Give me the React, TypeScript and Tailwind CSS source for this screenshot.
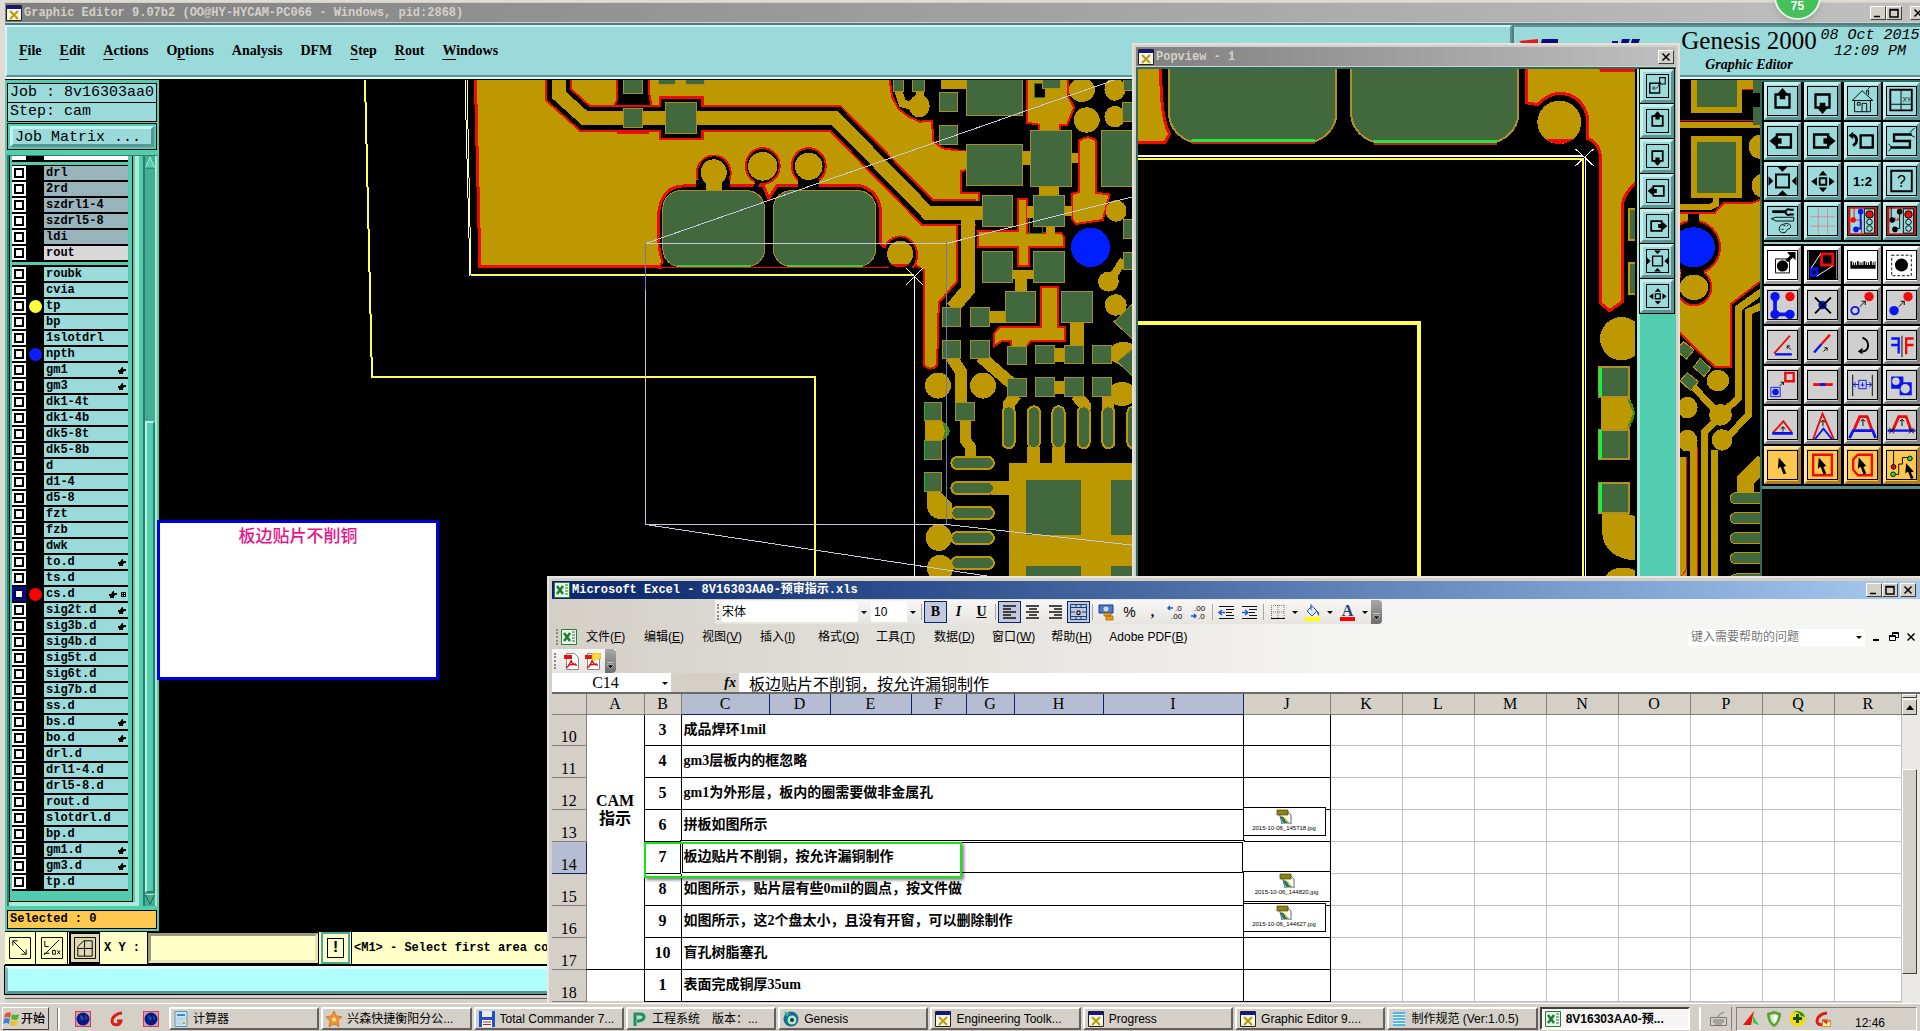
import type { ReactNode } from "react";

const MONO = "font-['Liberation_Mono','Noto_Sans_CJK_SC',monospace]";
const SERIF = "font-['Liberation_Serif','Noto_Sans_CJK_SC',serif]";
const SANS = "font-['Liberation_Sans','Noto_Sans_CJK_SC',sans-serif]";

const TEAL_BEVEL =
  "border-3 border-t-[#c6f0ef] border-l-[#c6f0ef] border-r-[#5c9496] border-b-[#5c9496] bg-[#9adadb]";
const GREY_BEVEL =
  "border-3 border-t-[#f0f0f0] border-l-[#f0f0f0] border-r-[#808080] border-b-[#808080] bg-[#cfcfcf]";
const WHITE_BEVEL =
  "border-3 border-t-[#ffffff] border-l-[#ffffff] border-r-[#a0a0a0] border-b-[#a0a0a0] bg-white";
const GOLD_BEVEL =
  "border-3 border-t-[#ffe3a0] border-l-[#ffe3a0] border-r-[#a97c28] border-b-[#a97c28] bg-[#fdc850]";
const WIN_BEVEL =
  "border border-t-white border-l-white border-r-[#404040] border-b-[#404040] bg-[#d4d0c8]";

const GOLD = "#be9800";
const PAD = "#42693e";
const RED = "#f00a00";
const YELLOW = "#ffff50";

/* ---------- layer list ---------- */

type Layer = { name: string; dot?: string; hand?: boolean; active?: boolean; tone?: string };

const drillLayers: Layer[] = [
  { name: "drl", tone: "bg-[#9ab4be]" },
  { name: "2rd", tone: "bg-[#9ab4be]" },
  { name: "szdrl1-4", tone: "bg-[#9ab4be]" },
  { name: "szdrl5-8", tone: "bg-[#9ab4be]" },
  { name: "ldi", tone: "bg-[#9ab4be]" },
  { name: "rout", tone: "bg-[#d8d8d8]" },
];

const layers: Layer[] = [
  { name: "roubk" },
  { name: "cvia" },
  { name: "tp", dot: "bg-[#ffff3c]" },
  { name: "bp" },
  { name: "1slotdrl" },
  { name: "npth", dot: "bg-[#0a1eff]" },
  { name: "gm1", hand: true },
  { name: "gm3", hand: true },
  { name: "dk1-4t" },
  { name: "dk1-4b" },
  { name: "dk5-8t" },
  { name: "dk5-8b" },
  { name: "d" },
  { name: "d1-4" },
  { name: "d5-8" },
  { name: "fzt" },
  { name: "fzb" },
  { name: "dwk" },
  { name: "to.d", hand: true },
  { name: "ts.d" },
  { name: "cs.d", dot: "bg-[#ff0000]", hand: true, active: true },
  { name: "sig2t.d", hand: true },
  { name: "sig3b.d", hand: true },
  { name: "sig4b.d" },
  { name: "sig5t.d" },
  { name: "sig6t.d" },
  { name: "sig7b.d" },
  { name: "ss.d" },
  { name: "bs.d", hand: true },
  { name: "bo.d", hand: true },
  { name: "drl.d" },
  { name: "drl1-4.d" },
  { name: "drl5-8.d" },
  { name: "rout.d" },
  { name: "slotdrl.d" },
  { name: "bp.d" },
  { name: "gm1.d", hand: true },
  { name: "gm3.d", hand: true },
  { name: "tp.d" },
];

function LayerRow({ layer }: { layer: Layer }) {
  return (
    <label className="flex h-4 items-start bg-black">
      <span
        className={`flex h-[14px] w-[14px] shrink-0 items-center justify-center ${layer.active ? "bg-[#0a0a96]" : "bg-white"}`}
      >
        <input
          type="checkbox"
          defaultChecked={layer.active}
          className="size-[10px] appearance-none border-2 border-black bg-white checked:border-[#000050]"
        />
      </span>
      <span className="flex h-[14px] w-[18px] shrink-0 items-center justify-center">
        {layer.dot && <span className={`size-[13px] rounded-full ${layer.dot}`} />}
      </span>
      <span
        className={`flex h-[14px] flex-1 items-center gap-1 pr-[2px] pl-[2px] text-xs leading-[14px] font-bold ${layer.tone ?? "bg-[#9adadb]"}`}
      >
        <span className="flex-1">{layer.name}</span>
        {layer.hand && (
          <svg width="8" height="8" viewBox="0 0 8 8">
            <path d="M0 4h2l2-3h1v2h3v2H6v1H5v2H1V6H0z" />
          </svg>
        )}
        {layer.active && (
          <svg width="5" height="5" viewBox="0 0 5 5" fill="none" stroke="#000">
            <path d="M.5.5h4v4h-4zM2.500 0v5M0 2.500h5" />
          </svg>
        )}
      </span>
    </label>
  );
}

function Sidebar() {
  return (
    <aside className={`flex w-[154px] shrink-0 flex-col bg-[#52ccae] px-[2px] pt-[3px] ${MONO}`}>
      <div className="h-[20px] border border-black bg-[#9adadb] pl-[2px] text-[15px] leading-[18px] whitespace-nowrap">
        Job : 8v16303aa0
      </div>
      <div className="h-[19px] border border-t-0 border-black bg-[#9adadb] pl-[2px] text-[15px] leading-[17px]">
        Step: cam
      </div>
      <div className="mt-px h-[27px] border border-black p-[2px]">
        <button className={`block h-full w-full border-2 pl-[2px] text-left text-[15px] leading-[17px] ${TEAL_BEVEL}`}>
          Job Matrix ...
        </button>
      </div>
      <div className="mt-[5px] flex min-h-0 flex-1 border-t border-l-2 border-[#357e6b]">
        <div className="flex flex-1 flex-col border-r-4 border-b-4 border-[#a8ecd8]">
          <div className="mr-[2px] flex min-h-0 flex-1 flex-col gap-[3px] border-x border-b border-black pr-1 pl-[2px]">
            <div className="flex h-[6px] bg-black pb-[2px]">
              <span className="w-[14px] bg-white" />
              <span className="ml-[18px] flex-1 bg-white" />
            </div>
            <div className="border-t border-black">
              {drillLayers.map((l) => (
                <LayerRow key={l.name} layer={l} />
              ))}
            </div>
            <div className="border-t-2 border-black">
              {layers.map((l) => (
                <LayerRow key={l.name} layer={l} />
              ))}
            </div>
          </div>
        </div>
        <div className="ml-1 flex w-[14px] flex-col border-x-2 border-l-[#2f7a68] border-r-[#a8ecd8] bg-[#44ad94]">
          <svg width="10" height="13" viewBox="0 0 10 13">
            <path d="M5 1 9.500 11.500H.5z" fill="#52ccae" stroke="#a8ecd8" />
            <path d="M.5 12h9" stroke="#1d6351" />
          </svg>
          <div className="h-[252px]" />
          <div className="flex-1 border-2 border-t-[#b9f2e2] border-r-[#2f7a68] border-b-[#2f7a68] border-l-[#b9f2e2] bg-[#52ccae]" />
          <svg width="10" height="13" viewBox="0 0 10 13">
            <path d="M5 11.500 9.500 1.500H.5z" fill="#44ad94" stroke="#1d6351" />
            <path d="M.5 1.500h9" stroke="#a8ecd8" />
          </svg>
        </div>
      </div>
      <div className="mt-1 mb-[2px] h-[19px] border border-black bg-[#ffc850] pl-[2px] text-xs leading-[17px] font-bold">
        Selected : 0
      </div>
    </aside>
  );
}

/* ---------- board artwork ---------- */

type Box = [number, number, number, number];

const pads: Box[] = [
  [377, 10, 43, 62], [377, 115, 43, 58], [473, 97, 72, 93], [1106, 68, 40, 56], [1106, 168, 40, 55],
  [1168, 10, 129, 126], [1168, 223, 129, 123], [1316, 181, 95, 170], [1342, 10, 43, 47], [1478, 181, 90, 170],
  [1530, 20, 40, 42], [1527, 99, 40, 56], [1205, 378, 70, 93], [1323, 378, 70, 93], [1205, 545, 70, 92],
  [1323, 545, 70, 92], [1531, 450, 40, 56], [1531, 548, 40, 52], [1258, 664, 70, 93], [1387, 664, 72, 93],
  [1112, 712, 42, 58], [1177, 712, 44, 58], [1112, 811, 42, 54], [1177, 811, 44, 54], [1262, 829, 44, 55],
  [1327, 826, 43, 54], [1394, 826, 44, 54], [1458, 826, 44, 54], [1262, 925, 44, 55], [1327, 923, 43, 56],
  [1394, 923, 44, 56], [1458, 923, 44, 56], [1070, 997, 40, 56], [1142, 997, 45, 56], [1070, 1112, 40, 56],
  [1070, 1209, 40, 56],
];

const goldDots: Box[] = [
  [585, 308, 30, 40], [698, 289, 34, 43], [804, 289, 32, 41], [1015, 552, 30, 40], [1102, 947, 30, 39],
  [1206, 947, 30, 39], [1104, 1403, 30, 40], [1107, 1495, 30, 40], [1059, 108, 24, 34], [1434, 60, 30, 36],
  [1445, 150, 30, 38], [1510, 58, 24, 34], [1510, 140, 24, 32], [1513, 423, 24, 32], [1495, 635, 24, 30],
  [1512, 705, 25, 32], [1530, 850, 34, 34], [1526, 972, 34, 36],
];

const goldLinks: Box[] = [
  [1297, 243, 20, 43], [1334, 350, 48, 28], [1410, 250, 16, 30], [1280, 600, 27, 64], [1221, 724, 38, 34],
  [1407, 757, 32, 70], [1370, 835, 25, 40], [1370, 933, 25, 40], [1307, 1130, 31, 52], [1365, 1130, 31, 52],
  [1225, 1234, 42, 40], [1275, 600, 48, 28], [1351, 471, 21, 20], [1110, 28, 56, 30], [1140, 243, 30, 40],
  [1307, 408, 16, 36], [1392, 408, 20, 30], [1350, 55, 20, 30],
];

function MainBoard() {
  return (
    <svg
      className="absolute inset-0 h-full w-full"
      shapeRendering="crispEdges"
      role="img"
      aria-label="Board artwork"
    >
      <g transform="translate(301 -10) scale(.4337 .3333)">
        {/* copper pour */}
        <path
          d="M34 0 46 590H466L970 600 985 590 1050 585 1071 602V886Q1085 906 1100 886L1104 698 1145 636V460H1196V368H1155V304L1168 300V245L1112 235 1092 215 1088 152 1060 155 1035 140 1012 118 996 80 988 0Z"
          fill={GOLD}
          stroke={RED}
          strokeWidth="2"
          vectorEffect="non-scaling-stroke"
        />
        <path d="M35 0 46 590H466" fill="none" stroke={RED} strokeWidth="3" vectorEffect="non-scaling-stroke" />
        {/* clearance around the two big pads and their vias */}
        <g fill="#000" stroke={RED} strokeWidth="3">
          <path d="M462 592 468 575Q458 540 458 500V430Q465 350 515 348H700L712 386 730 348H925Q968 365 970 430V520L985 540V592Z" vectorEffect="non-scaling-stroke" />
          <ellipse cx="585" cy="310" rx="38" ry="52" vectorEffect="non-scaling-stroke" />
          <ellipse cx="698" cy="288" rx="38" ry="52" vectorEffect="non-scaling-stroke" />
          <ellipse cx="804" cy="288" rx="38" ry="52" vectorEffect="non-scaling-stroke" />
          <ellipse cx="1015" cy="555" rx="38" ry="54" vectorEffect="non-scaling-stroke" />
        </g>
        <path d="M462 592 470 575Q460 540 461 500V430Q468 354 515 352H545V330H622V352H676L682 330 692 338 686 356 712 392 735 352H780V325H827V352H925Q965 369 967 430V525L985 540V592Z" />
        <ellipse cx="585" cy="310" rx="37" ry="51" />
        <ellipse cx="698" cy="288" rx="37" ry="51" />
        <ellipse cx="804" cy="288" rx="37" ry="51" />
        <ellipse cx="1015" cy="555" rx="37" ry="53" />
        <path d="M466 594H1066V640H466Z" />
        <path d="M567 335h37v28h-37z" fill={GOLD} />
        {/* clearance for the trace */}
        <path d="M362 20H435V63L442 110H355L362 90Z" stroke={RED} strokeWidth="2" vectorEffect="non-scaling-stroke" />
        <path d="M462 84h96v122h-96zM365 110h68v77h-68z" stroke={RED} strokeWidth="3" vectorEffect="non-scaling-stroke" />
        <g fill="none">
          <path d="M228 0V75L288 145H865L1078 428H1190" stroke={RED} strokeWidth="27" vectorEffect="non-scaling-stroke" />
          <path d="M464 86h92v118h-92zM367 112h64v63h-64z" fill="#000" />
          <path d="M228 0V75L288 145H865L1078 428H1200" stroke="#000" strokeWidth="23" vectorEffect="non-scaling-stroke" />
          <path d="M228 0V75L288 145H865L1078 428H1205" stroke={GOLD} strokeWidth="14" vectorEffect="non-scaling-stroke" />
          <path d="M1172 440V658L1135 715" stroke={GOLD} strokeWidth="14" vectorEffect="non-scaling-stroke" />
        </g>
        <path d="M1148 466h8v175h-8z" />
        {/* top right copper */}
        <g fill={GOLD} stroke={RED} strokeWidth="2">
          <path d="M1308 0H1400L1402 80 1416 112 1400 164H1383V190H1334V164L1308 158Z" vectorEffect="non-scaling-stroke" />
          <path d="M1428 212Q1448 192 1467 212V368L1498 374 1482 450 1420 462 1410 445V372L1428 366Z" vectorEffect="non-scaling-stroke" />
          <path d="M1195 484H1287V386H1308V490H1386L1392 500V530H1312V588H1286V530H1195Z" vectorEffect="non-scaling-stroke" />
          <path d="M1340 650H1378V770H1395V812H1318L1305 830H1270V812H1250L1232 828V790L1245 770H1340Z" vectorEffect="non-scaling-stroke" />
        </g>
        <path d="M1312 436h30v56h-30z" stroke="#2f7a1c" strokeWidth="1" vectorEffect="non-scaling-stroke" />
        <path d="M1325 42h24v40h-24z" stroke="#2f7a1c" strokeWidth="1" vectorEffect="non-scaling-stroke" />
        {goldLinks.map(([x, y, w, h]) => (
          <rect key={`${x}-${y}`} x={x} y={y} width={w} height={h} fill={GOLD} />
        ))}
        {goldDots.map(([x, y, rx, ry]) => (
          <ellipse key={`${x}-${y}`} cx={x} cy={y} rx={rx} ry={ry} fill={GOLD} />
        ))}
        <path d="M993 583h44q-22 18-44 0z" fill={RED} />
        <g fill="none" stroke={GOLD}>
          <path d="M1200 860 1280 950" strokeWidth="12" vectorEffect="non-scaling-stroke" />
          <path d="M1132 860 1155 905V1000" strokeWidth="12" vectorEffect="non-scaling-stroke" />
          <path d="M1165 1050V1110L1176 1130V1162" strokeWidth="11" vectorEffect="non-scaling-stroke" />
          <path d="M1282 975 1267 1000V1020M1420 975 1440 1005V1020M1495 975V1020" strokeWidth="12" vectorEffect="non-scaling-stroke" />
          <path d="M1530 570 1495 640M1010 60 1020 100 1060 115M1060 60V90" strokeWidth="8" vectorEffect="non-scaling-stroke" />
        </g>
        <path d="M1073 1053H1110Q1146 1083 1110 1112H1073Z" fill={GOLD} />
        <path d="M1112 1053Q1146 1083 1112 1112L1118 1083Z" fill="#3f8a0c" />
        <path d="M1076 1265H1108L1134 1300V1348H1105Q1076 1340 1076 1300Z" fill={GOLD} />
        {/* pads */}
        <g fill={PAD} stroke="#a8901e">
          {pads.map(([x, y, w, h]) => (
            <rect key={`${x}-${y}`} x={x} y={y} width={w} height={h} vectorEffect="non-scaling-stroke" />
          ))}
          <rect x="468" y="362" width="234" height="228" rx="42" ry="50" vectorEffect="non-scaling-stroke" />
          <rect x="723" y="362" width="235" height="228" rx="42" ry="50" vectorEffect="non-scaling-stroke" />
          <path d="M1508 755 1560 690V820ZM1515 875 1560 825V930Z" vectorEffect="non-scaling-stroke" />
          <path d="M1000 20h23v46h-23zM1043 20h27v46h-27zM458 20h40v25h-40zM520 20h44v25h-44z" vectorEffect="non-scaling-stroke" />
        </g>
        <path d="M500 588H672M755 588H930" stroke="#22d84a" strokeWidth="2" vectorEffect="non-scaling-stroke" />
        <path d="M1071 999v52M1071 1114v52M1071 1211v52" stroke="#00c83c" strokeWidth="1" vectorEffect="non-scaling-stroke" />
        <g fill={PAD} stroke={GOLD} strokeWidth="2">
          {[1265, 1323, 1380, 1438, 1495, 1553].map((x) => (
            <rect key={x} x={x - 14} y="1009" width="28" height="126" rx="14" ry="18" vectorEffect="non-scaling-stroke" />
          ))}
          {[1160, 1235, 1310, 1385, 1460].map((y) => (
            <rect key={y} x="1133" y={y} width="98" height="38" rx="16" ry="19" vectorEffect="non-scaling-stroke" />
          ))}
        </g>
        <path d="M1265 1180H1570V1540H1265Z" fill={GOLD} />
        <path d="M1305 1230h127v165h-127zM1500 1230h70v165h-70zM1305 1488h127v50h-127zM1500 1488h70v50h-70z" fill={PAD} />
        <ellipse cx="1454" cy="532" rx="45" ry="59" fill="#001eff" />
      </g>

      {/* board seen to the right of the popview */}
      <g transform="translate(961 -80) scale(.5102 .3333)">
        <g fill={GOLD}>
          <path d="M1119 200h101v138h-101zM1119 408h101v186h-101zM1220 200h20v68h-20zM1090 365h164v20h-164z" />
          <ellipse cx="1254" cy="440" rx="22" ry="36" />
          <ellipse cx="1260" cy="557" rx="22" ry="36" />
        </g>
        <path d="M1090 362H1240M1220 268h20" stroke={RED} strokeWidth="1" vectorEffect="non-scaling-stroke" />
        <path d="M1131 200h79v121h-79zM1131 427h77v151h-77zM1240 200h20v80h-20zM1240 320h20v55h-20z" fill={PAD} />
        <path d="M1168 590V612L1155 622H1090" fill="none" stroke={GOLD} strokeWidth="6" vectorEffect="non-scaling-stroke" />
        <path
          d="M1080 640H1165L1184 608H1240L1262 596V836L1198 912V1100H1165L1098 1000H1080Z"
          fill={GOLD}
          stroke={RED}
          strokeWidth="2"
          vectorEffect="non-scaling-stroke"
        />
        <g stroke={RED} strokeWidth="2">
          <ellipse cx="1124" cy="742" rx="52" ry="80" vectorEffect="non-scaling-stroke" />
          <ellipse cx="1125" cy="862" rx="34" ry="54" vectorEffect="non-scaling-stroke" />
        </g>
        <path d="M1113 642h22v40h-22zM1100 800h45v30h-45z" />
        <ellipse cx="1124" cy="742" rx="42" ry="60" fill="#001eff" />
        <ellipse cx="1125" cy="862" rx="28" ry="38" fill={GOLD} />
        <g fill="none" stroke={GOLD} strokeWidth="7">
          <path d="M1262 870 1212 925V1195L1180 1240" vectorEffect="non-scaling-stroke" />
          <path d="M1262 915 1232 935V1245L1185 1320" vectorEffect="non-scaling-stroke" />
          <path d="M1175 1250 1146 1295V1740M1165 1350V1740M1125 1330V1740M1104 1370V1740M1120 1155 1170 1235" vectorEffect="non-scaling-stroke" />
          <path d="M1262 1385 1226 1440V1480" strokeWidth="17" vectorEffect="non-scaling-stroke" />
        </g>
        <path d="M1110 1370V1710L1100 1728M1132 1340V1740" fill="none" stroke={RED} strokeWidth="1" vectorEffect="non-scaling-stroke" />
        <g fill={GOLD}>
          <ellipse cx="1172" cy="1142" rx="22" ry="32" />
          <ellipse cx="1177" cy="1245" rx="22" ry="32" />
          <ellipse cx="1180" cy="1320" rx="20" ry="32" />
          <ellipse cx="1112" cy="1223" rx="20" ry="32" />
          <ellipse cx="1112" cy="1322" rx="20" ry="32" />
        </g>
        <g fill={PAD} stroke={GOLD}>
          <path d="M1105 1025 1125 1050 1110 1078 1090 1050ZM1137 1075 1158 1105 1145 1130 1124 1102ZM1112 1118 1134 1145 1118 1172 1098 1142Z" vectorEffect="non-scaling-stroke" />
          {[1478, 1538, 1598, 1658, 1722].map((y) => (
            <rect key={y} x="1196" y={y} width="80" height="34" rx="12" ry="16" vectorEffect="non-scaling-stroke" />
          ))}
        </g>
      </g>

      {/* profile outlines */}
      <g transform="translate(-159 -80)" fill="none">
        <path d="M365 80 372 377H815V700" stroke={YELLOW} strokeWidth="2" />
        <path d="M465 80 470 276" stroke="#fff" />
        <path d="M467 80 471 275" stroke={YELLOW} />
        <path d="M471 275H914" stroke={YELLOW} strokeWidth="2" />
        <path d="M471 277H914" stroke="#000078" />
        <path d="M914.500 276V600" stroke="#fff" />
        <path d="M906 268 923 285M923 268 906 285" stroke="#fff" />
        <path d="M645.500 524V243.500H946.500V524.500H645.500L1000 578M645.500 243.500 1140 71M946.500 243.500 1140 195M946.500 524.500 1140 546" stroke="#c8c8dc" />
        <path d="M946.500 243V524M645.500 243V290" stroke="#6e78b4" />
      </g>
    </svg>
  );
}

function PopviewBoard() {
  return (
    <svg className="h-full w-full" shapeRendering="crispEdges" role="img" aria-label="Popview artwork">
      <g transform="translate(-18 -69) scale(.5102 .3333)">
        <path d="M10 180H80Q78 350 97 402L88 428H10Z" fill={GOLD} stroke={RED} strokeWidth="3" vectorEffect="non-scaling-stroke" />
        <g fill={PAD} stroke="#b09020" strokeWidth="2">
          <rect x="96" y="100" width="328" height="328" rx="60" ry="90" vectorEffect="non-scaling-stroke" />
          <rect x="453" y="100" width="328" height="328" rx="60" ry="90" vectorEffect="non-scaling-stroke" />
        </g>
        <path d="M142 430H382M497 432H738" stroke="#c81e1e" strokeWidth="2" vectorEffect="non-scaling-stroke" />
        <path d="M142 423H382M497 424H738" stroke="#22e645" strokeWidth="3" vectorEffect="non-scaling-stroke" />
        <path
          d="M796 180V308L818 314Q838 282 861 280 905 282 916 350V415Q942 430 942 480V910L960 932 985 905V610Q990 570 1020 540V180Z"
          fill={GOLD}
          stroke={RED}
          strokeWidth="3"
          vectorEffect="non-scaling-stroke"
        />
        <path d="M935 200H1010V216H942Z" fill={RED} />
        <ellipse cx="861" cy="367" rx="43" ry="65" fill={GOLD} />
        <path d="M834 418H888Q861 446 834 418Z" fill={RED} />
        <path d="M990 620Q992 585 1012 560V935H990Z" fill="#000" />
        <path d="M998 628h20v92h-20zM998 790h20v92h-20z" fill={PAD} stroke={GOLD} strokeWidth="2" vectorEffect="non-scaling-stroke" />
        <ellipse cx="983" cy="1016" rx="42" ry="65" fill={GOLD} />
        <path d="M943 1190H997Q1015 1240 997 1290H943Z" fill={GOLD} />
        <path d="M992 1188Q1026 1240 992 1290L1006 1240Z" fill="#3f8a0c" />
        <path d="M945 1538H985L1012 1550V1682Q950 1675 945 1600Z" fill={GOLD} />
        <ellipse cx="986" cy="1735" rx="34" ry="32" fill={GOLD} />
        <g fill={PAD} stroke="#b09020" strokeWidth="2">
          <rect x="938" y="1101" width="59" height="90" vectorEffect="non-scaling-stroke" />
          <rect x="938" y="1289" width="59" height="89" vectorEffect="non-scaling-stroke" />
          <rect x="938" y="1448" width="59" height="90" vectorEffect="non-scaling-stroke" />
        </g>
        <path d="M941 1103v86M941 1291v86M941 1450v86" stroke="#00ff3c" strokeWidth="3" vectorEffect="non-scaling-stroke" />
        <path d="M30 467H908" stroke="#fffab4" strokeWidth="2" vectorEffect="non-scaling-stroke" />
        <path d="M30 477H908V1800" fill="none" stroke={YELLOW} strokeWidth="2" vectorEffect="non-scaling-stroke" />
        <path d="M913 470V1800" stroke="#fff" strokeWidth="1" vectorEffect="non-scaling-stroke" />
        <path d="M893 447 928 497M928 447 893 497" stroke="#fff" strokeWidth="1" vectorEffect="non-scaling-stroke" />
        <path d="M30 969H586V1800" fill="none" stroke={YELLOW} strokeWidth="4" vectorEffect="non-scaling-stroke" />
      </g>
    </svg>
  );
}

/* ---------- tool icons, drawn on a 30x30 board ---------- */

const UP = "M15 1 21 8H18V13H12V8H9Z";
const LEFT = "M1 15 8 9V12H14V18H8V21Z";
const k = "#000";
const r = "#f00a0a";
const b = "#0a14f0";

const glyphs: Record<string, ReactNode> = {
  "Pan up": <><path d="M7.500 8h15v14h-15z" fill="none" stroke={k} strokeWidth="2.500" /><path d={UP} /></>,
  "Pan down": <g transform="matrix(1 0 0 -1 0 30)"><path d="M7.500 8h15v14h-15z" fill="none" stroke={k} strokeWidth="2.500" /><path d={UP} /></g>,
  Home: (
    <g fill="none" stroke={k}>
      <path d="M6.500 14.500v12h17v-12M4 14.500 14.500 4 26 14.500ZM19.500 7V3.500h2V9M14.500 26.500v-9h5v9M9.500 16.500h3v3h-3zM21 2l2-2" />
    </g>
  ),
  "XY view": (
    <>
      <path d="M3 3h23v22H3z" fill="none" stroke={k} strokeWidth="2" />
      <path d="M14.500 3v22M3 18.500h23" fill="none" stroke={k} />
      <text x="16" y="16" fontSize="7" fontFamily="Liberation Sans">XY</text>
    </>
  ),
  "Pan left": <><path d="M9 8h15v14H9z" fill="none" stroke={k} strokeWidth="2.500" /><path d={LEFT} /></>,
  "Pan right": <g transform="matrix(-1 0 0 1 30 0)"><path d="M9 8h15v14H9z" fill="none" stroke={k} strokeWidth="2.500" /><path d={LEFT} /></g>,
  "Previous view": <><path d="M13 9h13v13H13z" fill="none" stroke={k} strokeWidth="2.500" /><path d="M3 9h3q4 3 2 8l-3 3" fill="none" stroke={k} strokeWidth="3" /><path d="M0 9 5 5v8z" /></>,
  Snake: <><path d="M26 8H7v7h17v7H3" fill="none" stroke={k} strokeWidth="2.500" /><path d="M24 6 29 1M24 8l5 3M5 22l-4-4M5 22l-4 4" stroke={k} /></>,
  "Zoom in": <><path d="M8 8h14v14H8z" fill="none" stroke={k} strokeWidth="2" /><path d="M10 0h10l-5 5zM10 30h10l-5-5zM0 10v10l5-5zM30 10v10l-5-5z" /></>,
  "Zoom out": <><path d="M12 12h7v7h-7z" fill="none" stroke={k} strokeWidth="2" /><path d="M11 9h9l-4.500-5zM11 22h9l-4.500 5zM9 11v9l-6-4.500zM22 11v9l6-4.500z" /></>,
  "Scale 1:2": <text x="15" y="20" textAnchor="middle" fontSize="14" fontWeight="bold" fontFamily="Liberation Sans">1:2</text>,
  Help: <><path d="M4 4h22v22H4z" fill="none" stroke={k} strokeWidth="2" /><text x="15" y="21" textAnchor="middle" fontSize="17" fontFamily="Liberation Sans">?</text></>,
  Setup: (
    <g fill="none" stroke={k}>
      <path d="M4 5h14" strokeWidth="3" />
      <path d="M27 3h-4a3 3 0 1 0 0 5h4" strokeWidth="2" />
      <path d="M3 12.500 8 11h19v4H8zM11.500 24c0-5 3-5 6-6 4-1 7 1 6 4-1 2-3 1-4 3-1 4-8 3-8-1z" />
      <path d="M14 24h2M16 20h2M20 20h1" />
    </g>
  ),
  Grid: <path d="M2 10.500h26M2 20.500h26M10.500 1v28M20.500 1v28" stroke="#d8868c" fill="none" />,
  "Net colours": (
    <>
      <path d="M0 0h30v30H0z" fill="none" stroke="#d01818" strokeWidth="4" />
      <path d="M6 0v14M6 14h8v14" fill="none" stroke={r} />
      <path d="M13 5v18h-5" fill="none" stroke={b} strokeWidth="2" />
      <circle cx="5" cy="14" r="3" fill={r} /><circle cx="13" cy="5" r="3" fill={b} /><circle cx="8" cy="24" r="3" fill={b} />
      <path d="M17 2h11v26H17z" fill="none" stroke={k} />
      <circle cx="22.500" cy="8" r="4" fill={r} stroke={k} /><circle cx="22.500" cy="16" r="3" fill="none" stroke={k} /><circle cx="22.500" cy="23" r="3" fill="none" stroke={k} />
    </>
  ),
  "Net lights": (
    <>
      <path d="M0 0h30v30H0z" fill="none" stroke="#d01818" strokeWidth="4" />
      <path d="M4 0v14M13 5v18h-5" fill="none" stroke={k} />
      <path d="M5 14h8M8 11v3M11 11v3" stroke={r} />
      <circle cx="5" cy="14" r="3" /><circle cx="13" cy="5" r="3" /><circle cx="8" cy="24" r="3" />
      <path d="M17 2h11v26H17z" fill="none" stroke={k} />
      <circle cx="22.500" cy="8" r="4" fill={r} stroke={k} /><circle cx="22.500" cy="16" r="3" fill="none" stroke={k} /><circle cx="22.500" cy="23" r="3" fill="none" stroke={k} />
    </>
  ),
  "Move feature": <><path d="M7.500 8.500h15v15h-15z" fill="none" stroke={k} /><circle cx="15" cy="16" r="6" /><path d="M18 10 23 5 20 1h9v9l-3-3-5 5z" /></>,
  "Popview zoom": <><path d="M0 0h30v30H0z" /><path d="M14 3h12v12H14z" fill="none" stroke={r} strokeWidth="3" /><path d="M3 19h6v7H3z" fill="none" stroke={b} strokeWidth="3" /><path d="M3 18 13 3M9 27 26 16" stroke="#fff" /></>,
  Measure: <path d="M2 11h2v4h1v-3h1v3h1v-3h1v3h1v-4h2v4h1v-3h1v3h1v-3h1v3h1v-4h2v4h1v-3h1v3h1v-3h1v3h1v-4h2v4h1v-3h1v3h1v-4h1v8H2z" />,
  "Select area": <><path d="M4.500 4.500h21v22h-21z" fill="none" stroke={k} strokeDasharray="3 2" /><circle cx="15" cy="15" r="7" /></>,
  "Move nodes": <><path d="M7 6V24M7 25H23" stroke={b} strokeWidth="4" /><circle cx="7" cy="6" r="5" fill={b} /><circle cx="7" cy="25" r="5" fill={b} /><circle cx="23" cy="25" r="5" fill={b} /><circle cx="23" cy="6" r="5" fill={r} /></>,
  Delete: <><circle cx="15" cy="15" r="4.500" fill={b} /><path d="M7 7 24 24M24 7 7 24" stroke={k} strokeWidth="2" /></>,
  Copy: <><circle cx="7" cy="21" r="4" fill="none" stroke={b} strokeWidth="2" /><circle cx="22" cy="6" r="5" fill={r} /><path d="M12 17 18 11M14 11h4v4" stroke={k} fill="none" /></>,
  Move: <><circle cx="7" cy="21" r="5" fill={b} /><circle cx="22" cy="6" r="5" fill={r} /><path d="M12 17 18 11M14 11h4v4" stroke={k} fill="none" /></>,
  Angle: <><path d="M6 24 23 5" stroke={r} strokeWidth="2" /><path d="M7 25h18" stroke={b} strokeWidth="2.500" /><path d="m24 20-4-4M20 19v-3h3" stroke={k} fill="none" /></>,
  Stretch: <><path d="M6 23 14 14" stroke={b} strokeWidth="2.500" /><path d="M14 14 23 4" stroke={r} strokeWidth="2.500" /><path d="m16 22 4-4M17 18h3v3" stroke={k} fill="none" /></>,
  Rotate: <><path d="M15 7c8 3 8 14 0 15" fill="none" stroke={k} strokeWidth="2" /><path d="m10 22 5-4v7z" /></>,
  Mirror: (
    <>
      <path d="M4 8h8v16M4 15h8" fill="none" stroke={b} strokeWidth="2.500" />
      <path d="M15.500 5v23" stroke={k} />
      <path d="M28 8h-8v17M28 15h-8" fill="none" stroke={r} strokeWidth="2.500" />
    </>
  ),
  Resize: <><path d="M18 2h9v9h-9z" fill="none" stroke={r} strokeWidth="2.500" /><path d="M2.500 17.500h10v10h-10z" fill="none" stroke={b} /><circle cx="7.500" cy="22.500" r="3.500" fill={b} /><path d="m12 16 4-4M13 12h3v3" stroke={k} fill="none" /></>,
  Break: <><path d="M5 14.500h21" stroke={r} strokeWidth="3" /><path d="M12 14.500h6" stroke={b} strokeWidth="3" /></>,
  Spacing: <><path d="M4.500 4v23M25.500 4v23" stroke={k} /><path d="M11 10h8v9h-8zM5 14.500h6M19 14.500h6M8 12l-3 2.500L8 17M22 12l3 2.500-3 2.500M15 12v5M13 15h4" fill="none" stroke={b} /></>,
  Polarity: <><path d="M4 6h13v6h9v14H13v-7H4z" fill={b} /><circle cx="9" cy="11" r="4" fill="#cfcfcf" /><circle cx="19" cy="19" r="5" fill="#cfcfcf" /></>,
  Triangle: <><path d="M5 23 16 11 25 23" fill="none" stroke={r} strokeWidth="2" /><path d="M4 24h22" stroke={b} strokeWidth="3" /><path d="M15.500 22v-5M13 19l2.500-2 2.500 2" stroke={k} fill="none" /></>,
  Spike: <><path d="M5 30 15 3 27 30" fill="none" stroke={r} strokeWidth="2" /><path d="M7 30 16 19 25 30" fill="none" stroke={b} strokeWidth="2" /><path d="M15.500 16v-6M13 12l2.500-2 2.500 2" stroke={k} fill="none" /></>,
  Arc: <><path d="M6 20 12 6h8l5 14" fill="none" stroke={r} strokeWidth="3" /><path d="M1 29 5 21H26L29 29" fill="none" stroke={b} strokeWidth="3" /><path d="M15.500 16v-7M13 11l2.500-2 2.500 2" stroke={k} fill="none" /></>,
  "Arc ends": <><path d="M6 20 12 6h8l5 14" fill="none" stroke={r} strokeWidth="3" /><path d="M0 21h30" stroke={b} strokeWidth="2.500" /><path d="m2 18 5 6M7 18l-5 6M23 18l5 6M28 18l-5 6" stroke={k} /><path d="M15.500 16v-7M13 11l2.500-2 2.500 2" stroke={k} fill="none" /></>,
  Select: <path d="m11 7 8 9-3 1 3 7-3 1-3-8-3 2z" />,
  "Select box": <><path d="M5 4h20v22H5z" fill="none" stroke={r} strokeWidth="2.500" /><path d="m11 7 8 9-3 1 3 7-3 1-3-8-3 2z" /></>,
  "Select polygon": <><path d="M10 4h15v22H10L5 20V9z" fill="none" stroke={r} strokeWidth="2.500" /><path d="m11 7 8 9-3 1 3 7-3 1-3-8-3 2z" /></>,
  "Select net": <><path d="M6.500 0v16M6 25h6V14h4V7h8" fill="none" stroke={k} /><circle cx="6.500" cy="17" r="2.500" fill={r} stroke={k} /><circle cx="24" cy="8" r="2.500" fill="#1ee63c" stroke={k} /><circle cx="6" cy="25" r="2.500" fill="#1ee63c" stroke={k} /><path d="m20 13 8 9-3 1 3 6-3 1-3-8-3 2z" /></>,
  "Open view": <><path d="M4 11h14v14H4z" fill="none" stroke={k} strokeWidth="2" /><path d="M18 3h8v9h-8z" fill="none" stroke={k} strokeWidth="1.500" /><path d="M8 18h6M11 15l-3 3 3 3M14 18l6-9" stroke={k} fill="none" /></>,
};

const navTools = [
  "Pan up", "Pan down", "Home", "XY view", "Pan left", "Pan right", "Previous view", "Snake",
  "Zoom in", "Zoom out", "Scale 1:2", "Help", "Setup", "Grid", "Net colours", "Net lights",
];
const viewTools = ["Move feature", "Popview zoom", "Measure", "Select area"];
const editTools = [
  "Move nodes", "Delete", "Copy", "Move", "Angle", "Stretch", "Rotate", "Mirror",
  "Resize", "Break", "Spacing", "Polarity", "Triangle", "Spike", "Arc", "Arc ends",
];
const selectTools = ["Select", "Select box", "Select polygon", "Select net"];
const popviewTools = ["Open view", "Pan up", "Pan down", "Pan left", "Pan right", "Zoom in", "Zoom out"];

function ToolButton({ name, bevel }: { name: string; bevel: string }) {
  return (
    <button aria-label={name} className={`flex h-[38px] w-[37px] items-center justify-center ${bevel}`}>
      <svg width="31" height="30" viewBox="0 0 30 30" className="border border-black">
        {glyphs[name]}
      </svg>
    </button>
  );
}

function ToolGroup({ names, bevel }: { names: string[]; bevel: string }) {
  return (
    <div className="grid grid-cols-4 gap-x-[3px] gap-y-[2px]">
      {names.map((n) => (
        <ToolButton key={n} name={n} bevel={bevel} />
      ))}
    </div>
  );
}

function Toolbox() {
  return (
    <aside className="flex w-[160px] shrink-0 flex-col border-l-2 border-[#2f6b60] bg-black">
      <div className="flex flex-col gap-[2px] border-t-2 border-[#2f6b60] pl-[2px]">
        <ToolGroup names={navTools} bevel={TEAL_BEVEL} />
        <div className="h-[2px] bg-[#8fd0c8]" />
        <ToolGroup names={viewTools} bevel={WHITE_BEVEL} />
        <ToolGroup names={editTools} bevel={GREY_BEVEL} />
        <ToolGroup names={selectTools} bevel={GOLD_BEVEL} />
      </div>
      <div className="mt-[2px] h-[3px] bg-[#5c8f8a]" />
    </aside>
  );
}

/* ---------- window chrome ---------- */

function XIcon() {
  return (
    <svg width="16" height="16" viewBox="0 0 16 16" className="shrink-0">
      <path d="M.5.5h15v15H.5z" fill="#f4f4e8" stroke="#222" />
      <path d="M1 1h14v3H1z" fill="#14148c" />
      <path d="m4 6 8 8M12 6l-8 8" stroke="#b4a000" strokeWidth="2" />
    </svg>
  );
}

function WinButton({ name, d }: { name: string; d: string }) {
  return (
    <button aria-label={name} className={`flex h-[14px] w-4 items-center justify-center ${WIN_BEVEL}`}>
      <svg width="10" height="10" viewBox="0 0 10 10" fill="none" stroke="#000" strokeWidth="1.500">
        <path d={d} />
      </svg>
    </button>
  );
}

const MIN = "M1 8.500h6";
const MAX = "M1 1.500h8v7.500H1zM1 2h8";
const CLOSE = "m1.500 1.500 7 7M8.500 1.500l-7 7";

const menus: [string, string, string][] = [
  ["", "F", "ile"],
  ["", "E", "dit"],
  ["", "A", "ctions"],
  ["O", "p", "tions"],
  ["Analysis", "", ""],
  ["DFM", "", ""],
  ["", "S", "tep"],
  ["", "R", "out"],
  ["", "W", "indows"],
];

function GenesisWindow() {
  return (
    <section className="flex h-full flex-col border-t-2 border-l-5 border-[#dedbd4] bg-[#d4d0c8] pt-px">
      <header className="flex h-[19px] shrink-0 items-center bg-linear-to-r from-[#808080] to-[#c0c0c0] pl-px">
        <XIcon />
        <h1 className={`ml-[2px] flex-1 text-xs font-bold whitespace-nowrap text-[#d4d0c8] ${MONO}`}>
          Graphic Editor 9.07b2 (OO@HY-HYCAM-PC066 - Windows, pid:2868)
        </h1>
        <div className="-mr-[6px] flex">
          <WinButton name="Minimize" d={MIN} />
          <WinButton name="Maximize" d={MAX} />
          <span className="w-2" />
          <WinButton name="Close" d={CLOSE} />
        </div>
      </header>

      <div className="mt-px flex h-[56px] shrink-0 border-y-2 border-t-[#4d7f82] border-b-[#e0f8f6] bg-[#9adadb]">
        <nav className="flex flex-1 items-center gap-[18px] border-2 border-t-[#d4f4f3] border-r-[#5c9496] border-b-[#5c9496] border-l-[#d4f4f3] pl-[12px] text-sm font-bold">
          {menus.map(([pre, key, rest]) => (
            <button key={pre + key + rest} className={SERIF}>
              {pre}
              <span className="underline underline-offset-4">{key}</span>
              {rest}
            </button>
          ))}
        </nav>
        <div className="flex w-[408px] border-2 border-t-[#5c9496] border-r-0 border-b-[#5c9496] border-l-[#4d7f82] pl-[4px]">
          <svg width="160" height="48" viewBox="0 0 160 48" className="shrink-0">
            <path d="M1 14 20 12V20H8z" fill="#f01414" />
            <path d="M24 12h16v8H22zM94 14h6v6h-6zM104 12h8l-3 8h-7zM114 12h8l-3 8h-7z" fill="#0a0a78" />
          </svg>
          <div className={`flex flex-1 flex-col items-center ${SERIF}`}>
            <strong className="text-[25px] leading-7 font-medium whitespace-nowrap">Genesis 2000</strong>
            <em className="text-sm leading-5 font-bold">Graphic Editor</em>
          </div>
          <div className={`w-[100px] pt-px text-center text-[15px] leading-4 italic ${MONO}`}>
            <p className="whitespace-nowrap">08 Oct 2015</p>
            <p>12:09 PM</p>
          </div>
        </div>
      </div>

      <div className="flex min-h-0 flex-1 bg-black pt-px">
        <Sidebar />
        <div className="relative flex-1 overflow-hidden bg-black">
          <MainBoard />
        </div>
        <Toolbox />
      </div>

      <div className={`flex h-[34px] shrink-0 items-stretch gap-px border-y border-black bg-[#ffffc8] text-xs font-bold ${MONO}`}>
        {[
          ["Corner snap", "M4 4 18 18M4 4v5M4 4h5M18 18v-5M18 18h-5"],
          ["Angle snap", "M3 19 19 3M3 17h6M4 4v6h4M12 14h3v4h-3zM17 14l3 4M20 14l-3 4"],
          ["Grid snap", "M4 20V10L10 4H19V20ZM11 4v16M4 12h15"],
        ].map(([name, d], i) => (
          <button
            key={name}
            aria-label={name}
            className={`flex w-[31px] items-center justify-center border-r border-black ${i === 2 ? "border-2 border-[#44ad94] bg-[#ded9b0]" : ""}`}
          >
            <svg width="22" height="22" viewBox="0 0 23 23" fill="none" stroke="#000">
              <path d="M.5.5h22v22H.5z" />
              <path d={d} />
            </svg>
          </button>
        ))}
        <label htmlFor="xy" className="flex w-[46px] items-center pl-[3px] whitespace-pre">
          X Y :
        </label>
        <input
          id="xy"
          className="my-px w-[170px] border-3 border-[#9c987a] border-r-[#e8e4b8] border-b-[#e8e4b8] bg-[#ffffc8] px-1 outline outline-black"
        />
        <button aria-label="Message" className="ml-[2px] flex w-[29px] items-center justify-center border-2 border-[#44ad94] bg-[#ffffc8]">
          <span className="flex h-[20px] w-[17px] items-center justify-center border border-black text-base">!</span>
        </button>
        <p className="flex flex-1 items-center border-l border-black pl-[2px] whitespace-nowrap">
          {"<M1> - Select first area corner"}
        </p>
      </div>
      <div className="mt-px h-[28px] shrink-0 border-3 border-t-[#e0ffff] border-r-[#5c9496] border-b-[#5c9496] border-l-[#7ab8b8] bg-[#b0ffff] outline outline-black" />
      <div className="mt-[4px] h-[5px] shrink-0 border-t border-[#606060] bg-[#d4d0c8]" />
    </section>
  );
}

function PopviewWindow() {
  return (
    <section className="absolute top-[43px] bottom-0 left-[1132px] flex w-[548px] flex-col border-2 border-[#e4e1da] bg-[#d4d0c8] p-[2px]">
      <header className="flex h-[19px] shrink-0 items-center bg-linear-to-r from-[#808080] to-[#c0c0c0] pr-[2px] pl-[2px]">
        <XIcon />
        <h2 className={`ml-[2px] flex-1 text-xs font-bold text-[#d4d0c8] ${MONO}`}>Popview - 1</h2>
        <WinButton name="Close popview" d={CLOSE} />
      </header>
      <div className="mt-px flex min-h-0 flex-1 border-t-2 border-l-2 border-[#2f6b60] bg-black">
        <div className="min-w-0 flex-1 overflow-hidden">
          <PopviewBoard />
        </div>
        <div className="ml-[2px] flex w-[39px] flex-col gap-px border-l-3 border-[#a8ecd8] bg-[#52ccae]">
          {popviewTools.map((n) => (
            <button key={n} aria-label={n} className={`flex h-[34px] w-[34px] items-center justify-center outline outline-black ${TEAL_BEVEL}`}>
              <svg width="23" height="24" viewBox="0 0 30 30" className="border border-black">
                {glyphs[n]}
              </svg>
            </button>
          ))}
        </div>
      </div>
    </section>
  );
}

/* ---------- spreadsheet ---------- */

const colWidths = [34, 58, 37, 88, 61, 81, 55, 48, 89, 140, 87, 72, 72, 72, 72, 72, 72, 72];
const colNames = ["", ..."ABCDEFGHIJKLMNOPQR"];

const sheet = [
  { row: 10, no: 3, text: "成品焊环1mil" },
  { row: 11, no: 4, text: "gm3层板内的框忽略" },
  { row: 12, no: 5, text: "gm1为外形层，板内的圈需要做非金属孔" },
  { row: 13, no: 6, text: "拼板如图所示", file: "2015-10-06_145718.jpg" },
  { row: 14, no: 7, text: "板边贴片不削铜，按允许漏铜制作" },
  { row: 15, no: 8, text: "如图所示，贴片层有些0mil的圆点，按文件做", file: "2015-10-06_144820.jpg" },
  { row: 16, no: 9, text: "如图所示，这2个盘太小，且没有开窗，可以删除制作", file: "2015-10-06_144627.jpg" },
  { row: 17, no: 10, text: "盲孔树脂塞孔" },
  { row: 18, no: 1, text: "表面完成铜厚35um" },
];

const excelMenus = [
  ["文件", "F"], ["编辑", "E"], ["视图", "V"], ["插入", "I"], ["格式", "O"],
  ["工具", "T"], ["数据", "D"], ["窗口", "W"], ["帮助", "H"], ["Adobe PDF", "B"],
];

function Caret() {
  return (
    <svg width="12" height="16" viewBox="0 0 12 16" className="shrink-0">
      <path d="M3 7h6l-3 3z" />
    </svg>
  );
}

function Grip() {
  return <span className="mx-[2px] h-4 w-[3px] border-l-2 border-dotted border-[#8c8a84]" />;
}

function Overflow() {
  return (
    <button aria-label="More buttons" className="flex h-[24px] w-[11px] items-end justify-center rounded-r-sm bg-linear-to-b from-[#a8a8a8] to-[#6e6e6e] pb-1">
      <svg width="7" height="8" viewBox="0 0 7 8" stroke="#fff" strokeWidth=".5">
        <path d="M0 1.500h7M0 4h7L3.500 7.500z" />
      </svg>
    </button>
  );
}

function FmtButton({ name, on, children }: { name: string; on?: boolean; children: ReactNode }) {
  return (
    <button
      aria-label={name}
      className={`flex h-[22px] w-[23px] shrink-0 items-center justify-center text-sm leading-none ${on ? "border border-[#0a246a] bg-[#c3c9dc]" : ""}`}
    >
      {children}
    </button>
  );
}

function Lines({ d }: { d: string }) {
  return (
    <svg width="16" height="16" viewBox="0 0 16 16" fill="none" stroke="#111" strokeWidth="1.500">
      <path d={d} />
    </svg>
  );
}

function Divider() {
  return <span className="mx-[2px] h-4 w-px bg-[#a8a6a0]" />;
}

function PdfIcon({ note }: { note?: boolean }) {
  return (
    <svg width="17" height="17" viewBox="0 0 17 17">
      <path d="M3.500.5h8l4 4v12h-12z" fill="#fff" stroke="#888" />
      <path d="M1 2h8v4H1z" fill="#e01414" />
      <path d="M8 7c0 3-3 7-5 8M8 7c0 3 3 5 6 5M5 12l8-1" stroke="#e01414" strokeWidth="1.500" fill="none" />
      {note && <path d="M8 0h9v6h-5l-3 3V6H8z" fill="#ffd83c" stroke="#c89600" strokeWidth=".5" />}
    </svg>
  );
}

function ExcelIcon() {
  return (
    <svg width="16" height="16" viewBox="0 0 16 16" className="shrink-0">
      <path d="M.5.5h15v15H.5z" fill="#e8f4e8" stroke="#2c7a3c" />
      <path d="M11 3h3M11 6h3M11 9h3M11 12h3" stroke="#2c7a3c" />
      <path d="m3 4 6 8M9 4l-6 8" stroke="#1e7a32" strokeWidth="2.500" />
    </svg>
  );
}

function FormatBar() {
  return (
    <div className="flex h-[26px] items-center pl-[163px]">
      <div className="flex h-[24px] items-center bg-linear-to-b from-[#f8f7f5] to-[#e6e4df]">
        <Grip />
        <select aria-label="Font" className="h-[20px] w-[136px] appearance-none bg-white text-xs">
          <option>宋体</option>
        </select>
        <Caret />
        <select aria-label="Font size" className="ml-px h-[20px] w-[36px] appearance-none bg-white pl-[3px] text-xs">
          <option>10</option>
        </select>
        <Caret />
        <Divider />
        <FmtButton name="Bold" on><b className={SERIF}>B</b></FmtButton>
        <FmtButton name="Italic"><b className={`italic ${SERIF}`}>I</b></FmtButton>
        <FmtButton name="Underline"><b className={`underline ${SERIF}`}>U</b></FmtButton>
        <Divider />
        <FmtButton name="Align left" on><Lines d="M1 2h13M1 5h8M1 8h13M1 11h8M1 14h13" /></FmtButton>
        <FmtButton name="Center"><Lines d="M1 2h13M4 5h8M1 8h13M4 11h8M1 14h13" /></FmtButton>
        <FmtButton name="Align right"><Lines d="M1 2h13M6 5h8M1 8h13M6 11h8M1 14h13" /></FmtButton>
        <FmtButton name="Merge and center" on>
          <svg width="17" height="16" viewBox="0 0 17 16" fill="none" stroke="#16407a">
            <path d="M.5.5h16v15H.5zM.5 3.500h16M.5 12.500h16M6 .5v3M11 .5v3M6 12.500v3M11 12.500v3M1 8h4M16 8h-4" />
            <path d="M7 7h3v3.500H7z" stroke="#000" />
          </svg>
        </FmtButton>
        <Divider />
        <FmtButton name="Currency">
          <svg width="17" height="17" viewBox="0 0 17 17">
            <path d="M1 1h14v8H1z" fill="#5078c8" stroke="#143c8c" />
            <circle cx="8" cy="5" r="2.500" fill="#c8dcff" />
            <path d="M6 9h7v3H6zM8 12h7v4H8z" fill="#e6a01e" stroke="#a05a00" strokeWidth=".7" />
          </svg>
        </FmtButton>
        <FmtButton name="Percent">%</FmtButton>
        <FmtButton name="Comma"><b className={SERIF}>,</b></FmtButton>
        <FmtButton name="Increase decimal">
          <svg width="18" height="16" viewBox="0 0 18 16">
            <path d="M1 4h5M3 2 1 4l2 2" stroke="#1e5ad2" strokeWidth="1.500" fill="none" />
            <text x="8" y="7" fontSize="8" fontFamily="Liberation Sans">.0</text>
            <text x="4" y="15" fontSize="8" fontFamily="Liberation Sans">.00</text>
          </svg>
        </FmtButton>
        <FmtButton name="Decrease decimal">
          <svg width="18" height="16" viewBox="0 0 18 16">
            <text x="4" y="7" fontSize="8" fontFamily="Liberation Sans">.00</text>
            <path d="M1 12h5M4 10l2 2-2 2" stroke="#1e5ad2" strokeWidth="1.500" fill="none" />
            <text x="8" y="15" fontSize="8" fontFamily="Liberation Sans">.0</text>
          </svg>
        </FmtButton>
        <Divider />
        <FmtButton name="Decrease indent">
          <svg width="17" height="16" viewBox="0 0 17 16" fill="none" stroke="#111">
            <path d="M1 2.500h15M8 5.500h8M8 8.500h6M8 11.500h8M1 14.500h15" /><path d="M7 8.500H1M4 6 1 8.500 4 11" stroke="#1e5ad2" strokeWidth="1.500" />
          </svg>
        </FmtButton>
        <FmtButton name="Increase indent">
          <svg width="17" height="16" viewBox="0 0 17 16" fill="none" stroke="#111">
            <path d="M1 2.500h15M8 5.500h8M8 8.500h6M8 11.500h8M1 14.500h15" /><path d="M1 8.500h6M4 6l3 2.500L4 11" stroke="#1e5ad2" strokeWidth="1.500" />
          </svg>
        </FmtButton>
        <Divider />
        <FmtButton name="Borders">
          <svg width="14" height="14" viewBox="0 0 14 14" fill="none" stroke="#777" strokeDasharray="1 1">
            <path d="M.5 0v13M7 0v13M13 0v13M0 .5h13M0 7h13" /><path d="M0 13.500h14" stroke="#000" strokeDasharray="none" />
          </svg>
        </FmtButton>
        <Caret />
        <FmtButton name="Fill color">
          <svg width="17" height="17" viewBox="0 0 17 17">
            <path d="M3 7 8 2l5 5-5 5z" fill="#dce8fa" stroke="#28509b" /><path d="M13 7q3 1 2 5l-2-3z" fill="#28509b" /><path d="M7 0v6" stroke="#28509b" />
            <path d="M1 13h15v4H1z" fill="#ffff00" />
          </svg>
        </FmtButton>
        <Caret />
        <FmtButton name="Font color">
          <span className={`border-b-4 border-[#ff0000] px-[2px] text-base leading-[13px] font-bold text-[#28407a] ${SERIF}`}>A</span>
        </FmtButton>
        <Caret />
        <Overflow />
      </div>
    </div>
  );
}

function EmbeddedImage({ file, wide }: { file: string; wide?: boolean }) {
  return (
    <div className={`absolute -top-[3px] -left-px z-10 flex flex-col items-center border border-black bg-white pt-px ${wide ? "h-[31px] w-[88px]" : "h-[29px] w-[83px]"}`}>
      <svg width="18" height="15" viewBox="0 0 18 15">
        <path d="M4 3h9l3 3v9H7z" fill="#fff" stroke="#222" strokeWidth=".7" />
        <path d="M2 1h11v5H2z" fill="#8c8214" stroke="#4b4600" strokeWidth=".7" />
        <path d="m5 7 4 1 2 4 4 2H8z" fill="#1e7878" />
        <path d="m9 8 4 5" stroke="#f0d21e" strokeWidth="1.500" />
      </svg>
      <span className={`text-[6px] leading-[8px] font-normal whitespace-nowrap ${SANS}`}>{file}</span>
    </div>
  );
}

function Sheet() {
  return (
    <table className={`w-full table-fixed border-collapse ${SERIF}`}>
      <colgroup>
        {colWidths.map((w, i) => (
          <col key={i} style={{ width: w }} />
        ))}
        <col />
      </colgroup>
      <thead>
        <tr className="h-[20px]">
          {colNames.map((c, i) => {
            const selected = i >= 3 && i <= 9;
            return (
              <th
                key={c}
                className={`border-r border-b p-0 text-base leading-[19px] font-normal ${selected ? "border-[#0a246a] bg-[#b6bdd2]" : "border-[#808080] bg-[#d4d0c8]"}`}
              >
                {c}
              </th>
            );
          })}
        </tr>
      </thead>
      <tbody>
        {sheet.map((s, i) => (
          <tr key={s.row} className={i === 0 ? "h-[31px]" : "h-8"}>
            <th
              className={`border-r border-b p-0 align-bottom text-base leading-[17px] font-normal ${s.row === 14 ? "border-[#0a246a] bg-[#b6bdd2]" : "border-[#808080] bg-[#d4d0c8]"}`}
            >
              {s.row}
            </th>
            {i === 0 && (
              <td rowSpan={8} className="border-r border-b border-black bg-white p-0 pb-16 text-center text-base leading-[18px] font-bold">
                CAM
                <br />
                指示
              </td>
            )}
            {s.row === 18 && <td className="border-r border-black bg-white" />}
            <td className="relative border border-t-0 border-black bg-white p-0 text-center text-base leading-5 font-bold">
              {s.no}
              {s.row === 14 && (
                <div className="pointer-events-none absolute top-0 -left-px z-10 h-[36px] w-[318px] border-2 border-[#1ee11e] shadow-[2px_2px_3px_#00000080]" />
              )}
            </td>
            <td colSpan={7} className="relative border border-t-0 border-black bg-white p-0 pl-[2px] text-sm leading-5 font-bold whitespace-nowrap">
              {s.text}
              {s.row === 14 && (
                <div className="absolute -inset-px border border-white outline outline-black">
                  <div className="h-full border border-black" />
                </div>
              )}
            </td>
            <td className="relative border border-t-0 border-black bg-white p-0">
              {s.file && <EmbeddedImage file={s.file} wide={s.row === 15} />}
            </td>
            {colNames.slice(11).map((c) => (
              <td key={c} className="border-r border-b border-[#c0c0c0] bg-white p-0" />
            ))}
          </tr>
        ))}
      </tbody>
    </table>
  );
}

function ExcelWindow() {
  return (
    <section className={`absolute top-[576px] right-0 bottom-0 left-[547px] flex flex-col overflow-hidden border-t-2 border-l-2 border-[#e8e6e0] bg-[#d4d0c8] pt-[3px] pl-[3px] ${SANS}`}>
      <header className="flex h-[18px] shrink-0 items-center bg-linear-to-r from-[#0a246a] to-[#a6caf0] pr-1 pl-[2px]">
        <ExcelIcon />
        <h2 className={`flex-1 pl-[2px] text-xs font-bold whitespace-nowrap text-white ${MONO}`}>
          Microsoft Excel - 8V16303AA0-预审指示.xls
        </h2>
        <div className="flex">
          <WinButton name="Minimize Excel" d={MIN} />
          <WinButton name="Restore Excel" d={MAX} />
          <span className="w-[2px]" />
          <WinButton name="Close Excel" d={CLOSE} />
        </div>
      </header>

      <div className="shrink-0 bg-linear-to-r from-[#d4d0c8] to-[#f5f5f3] to-60%">
        <FormatBar />
        <div className="flex h-[24px] items-center pl-[2px]">
          <Grip />
          <ExcelIcon />
          <nav className="ml-[9px] flex flex-1 items-center gap-4">
            {excelMenus.map(([t, key]) => (
              <button key={t} className="min-w-[42px] text-left text-xs whitespace-nowrap">
                {t}(<u>{key}</u>)
              </button>
            ))}
          </nav>
          <div className="flex h-[17px] items-center bg-white">
            <input
              aria-label="Help question"
              placeholder="键入需要帮助的问题"
              className="w-[165px] bg-white pl-[3px] text-xs leading-4 outline-none placeholder:text-[#777]"
            />
            <Caret />
          </div>
          <div className="flex items-center gap-[7px] pr-1 pl-[7px]">
            <svg width="10" height="10" viewBox="0 0 10 10"><path d="M1 7h6v2H1z" /></svg>
            <svg width="10" height="10" viewBox="0 0 10 10" fill="none" stroke="#000"><path d="M3.500 3V.5h6v5H7M.5 3.500h6v5h-6zM3.500 1.500h6M.5 4.500h6" /></svg>
            <svg width="10" height="10" viewBox="0 0 10 10" stroke="#000" strokeWidth="1.500"><path d={CLOSE} /></svg>
          </div>
        </div>
        <div className="flex h-[24px] items-center">
          <div className="flex h-[24px] items-center gap-1 bg-linear-to-b from-[#f8f7f5] to-[#e6e4df]">
            <Grip />
            <button aria-label="Convert to PDF"><PdfIcon /></button>
            <button aria-label="Convert to PDF and comment"><PdfIcon note /></button>
            <Overflow />
          </div>
        </div>
      </div>

      <div className={`flex h-[19px] shrink-0 items-center bg-white text-base leading-[18px] ${SERIF}`}>
        <input aria-label="Name box" defaultValue="C14" className="h-full w-[107px] min-w-0 bg-white text-center" />
        <span className="flex h-full w-[80px] items-center bg-[#d4d0c8]">
          <span className="flex h-full items-center bg-white"><Caret /></span>
          <i className="ml-auto pr-[3px] text-sm font-bold">fx</i>
        </span>
        <input aria-label="Formula" defaultValue="板边贴片不削铜，按允许漏铜制作" className="h-full min-w-0 flex-1 bg-white pl-[10px]" />
      </div>

      <div className="flex min-h-0 flex-1 border-t-2 border-[#6a6a66]">
        <div className="min-w-0 flex-1 overflow-hidden">
          <Sheet />
        </div>
        <div className="flex w-[18px] shrink-0 flex-col bg-[#ebe9e5] pr-[3px]">
          <div className={`mb-px h-[4px] ${WIN_BEVEL}`} />
          <button aria-label="Scroll up" className={`flex h-4 items-center justify-center ${WIN_BEVEL}`}>
            <svg width="8" height="5" viewBox="0 0 8 5"><path d="M4 0 8 5H0z" /></svg>
          </button>
          <div className="h-[54px]" />
          <div className={`h-[205px] ${WIN_BEVEL}`} />
        </div>
      </div>
    </section>
  );
}

/* ---------- taskbar ---------- */

function GlobeIcon() {
  return (
    <svg width="16" height="16" viewBox="0 0 16 16">
      <path d="M0 0h16v16H0z" fill="#d43c50" />
      <path d="M1 1h14v14H1z" fill="#c8a0b4" />
      <circle cx="8" cy="8" r="6.500" fill="#0a148c" />
      <path d="M5 4l3 1 1 3-2 2-2-3zM10 4l2 2v3l-2-1z" fill="#1e5078" />
    </svg>
  );
}

function GIcon({ size }: { size: number }) {
  return (
    <svg width={size} height={size} viewBox="0 0 16 16" fill="none" stroke="#dc1e14" strokeWidth="3">
      <path d="M13 2C8 2 3 6 3 10c0 5 8 5 9 0H8" />
    </svg>
  );
}

const tasks: { label: string; icon: ReactNode; active?: boolean }[] = [
  { label: "计算器", icon: <svg width="14" height="16" viewBox="0 0 14 16"><path d="M1 .5h12v15H1z" fill="#c8e6f5" stroke="#5a96b4" /><path d="M3 3h8v2H3z" fill="#3c8cc8" /><path d="M3 7h2v2H3zM6 7h2v2H6zM9 7h2v2H9zM3 11h2v2H3zM6 11h2v2H6z" fill="#fff" stroke="#78aac8" strokeWidth=".5" /><path d="M9 11h2v2H9z" fill="#f08c1e" /></svg> },
  { label: "兴森快捷衡阳分公...", icon: <svg width="16" height="16" viewBox="0 0 16 16"><path d="m8 0 2.500 5 5.500.8-4 4 1 6L8 13l-5 2.800 1-6-4-4L5.500 5z" fill="#f0962d" stroke="#c86414" strokeWidth=".7" /><circle cx="8" cy="8.500" r="2" fill="#ffe6a0" /></svg> },
  { label: "Total Commander 7...", icon: <svg width="16" height="16" viewBox="0 0 16 16"><path d="M0 0h16v16H0z" fill="#1e50c8" /><path d="M3 0h10v6H3z" fill="#e6ecff" /><path d="M3 9h10v7H3z" fill="#fff" /><path d="M4 11h8M4 13.500h8" stroke="#c81e1e" /></svg> },
  { label: "工程系统　版本：...", icon: <svg width="16" height="16" viewBox="0 0 16 16" fill="none" stroke="#149664" strokeWidth="3"><path d="M4 15V3h5q4 0 4 3t-5 4H6" /></svg> },
  { label: "Genesis", icon: <svg width="16" height="16" viewBox="0 0 16 16"><circle cx="8" cy="8" r="7.500" fill="#146e8c" /><circle cx="9" cy="9" r="4.500" fill="#b4e6c8" /><circle cx="9" cy="9" r="2" fill="#0a3c5a" /><path d="M1 1l6 1-3 4z" fill="#28b4a0" /></svg> },
  { label: "Engineering Toolk...", icon: <XIcon /> },
  { label: "Progress", icon: <XIcon /> },
  { label: "Graphic Editor 9....", icon: <XIcon /> },
  { label: "制作规范 (Ver:1.0.5)", icon: <svg width="14" height="14" viewBox="0 0 14 14"><path d="M1 0h12v14H1z" fill="#e6f5ff" /><path d="M1 1h12M1 4h12M1 7h12M1 10h12M1 13h12" stroke="#28a0dc" strokeWidth="1.500" /></svg> },
  { label: "8V16303AA0-预...", icon: <ExcelIcon />, active: true },
];

function Taskbar() {
  return (
    <footer className={`flex h-[28px] shrink-0 items-center border-t border-white bg-[#d4d0c8] pt-[3px] pb-px pl-[2px] ${SANS}`}>
      <button className={`flex h-[23px] w-[47px] items-center gap-px text-xs font-medium whitespace-nowrap ${WIN_BEVEL}`}>
        <svg width="17" height="16" viewBox="0 0 17 16" className="shrink-0">
          <path d="M2 3q3-3 6-1L7 7Q4 5 1 7z" fill="#e6502d" />
          <path d="M9 3q3 2 7 0l-1 5q-3 2-7 0z" fill="#50b432" />
          <path d="M1 8q3-2 6 0l-1 5Q3 11 0 13z" fill="#3c82dc" />
          <path d="M8 9q3 2 7 0l-1 5q-3 2-7 0z" fill="#f5be28" />
        </svg>
        开始
      </button>
      <div className="ml-[9px] flex h-[22px] w-[111px] items-center gap-[18px] border-l-2 border-white pl-[15px] shadow-[-1px_0_0_#808080]">
        <button aria-label="Genesis launcher"><GlobeIcon /></button>
        <button aria-label="G launcher"><GIcon size={16} /></button>
        <button aria-label="Genesis viewer"><GlobeIcon /></button>
      </div>
      <div className="flex min-w-0 flex-1 gap-[2px]">
        {tasks.map((t) => (
          <button
            key={t.label}
            className={`flex h-[23px] min-w-0 flex-1 items-center gap-[5px] border-2 pl-[3px] text-xs whitespace-pre ${t.active ? "border-t-[#404040] border-r-white border-b-white border-l-[#404040] bg-[#f6f5f3] font-bold" : "border-t-white border-r-[#606060] border-b-[#606060] border-l-white"}`}
          >
            <span className="shrink-0">{t.icon}</span>
            <span className="truncate">{t.label}</span>
          </button>
        ))}
      </div>
      <div className="ml-[9px] flex h-[23px] w-[33px] items-center border-r border-l-2 border-r-[#808080] border-l-white pl-[9px]">
        <svg width="17" height="14" viewBox="0 0 17 14" fill="none" stroke="#777">
          <path d="M.5 5.500h16v8H.5zM3 8h11M3 10h11M5 12h7M8 5q0-3 6-5" />
        </svg>
      </div>
      <div className="ml-1 mr-[3px] flex h-[24px] w-[181px] items-center gap-2 border border-t-[#808080] border-r-white border-b-white border-l-[#808080] pl-[6px]">
        <svg width="16" height="15" viewBox="0 0 16 15"><path d="M0 14 11 0 8 14z" fill="#e61414" /><path d="m10 5 6 9-6-2z" fill="#28d23c" /></svg>
        <svg width="14" height="16" viewBox="0 0 14 16"><path d="m7 0 7 2q0 10-7 14Q0 12 0 2z" fill="#5aa532" /><path d="m7 3 4 1q0 6-4 9z" fill="#fff" /><path d="m7 3-4 1q0 6 4 9z" fill="#d2f0be" /></svg>
        <svg width="17" height="17" viewBox="0 0 17 17"><circle cx="8.500" cy="8.500" r="8" fill="#f0dc14" /><path d="M3 3a8 8 0 0 1 13 4l-4-1A6 6 0 0 0 3 3z" fill="#28961e" /><path d="M8.500 4v9M4 8.500h9" stroke="#145014" strokeWidth="3" /></svg>
        <span className="flex items-end">
          <GIcon size={16} />
          <svg width="9" height="7" viewBox="0 0 9 7" className="-ml-2"><path d="M.5.5h8v6h-8zM.5.5 4.500 4l4-3.500" fill="#fff0a0" stroke="#c87814" strokeWidth=".8" /></svg>
        </span>
        <time className="mt-2 ml-4 text-xs leading-3">12:46</time>
      </div>
    </footer>
  );
}

export default function App() {
  return (
    <div className="flex h-screen w-full flex-col overflow-hidden bg-[#d4d0c8] text-black">
      <main className="relative min-h-0 flex-1 overflow-hidden">
        <GenesisWindow />
        <div className={`absolute top-[520px] left-[157px] h-[160px] w-[282px] border-3 border-[#0000dc] bg-white pt-[2px] text-center text-[17px] leading-6 font-medium text-[#e6148c] ${SANS}`}>
          板边贴片不削铜
        </div>
        <PopviewWindow />
        <ExcelWindow />
        <div className={`absolute -top-[27px] left-[1774px] flex size-[47px] items-end justify-center rounded-full border-2 border-[#e6f5e6] bg-[#46c05a] pb-[6px] text-xs leading-3 font-bold text-white shadow-md ${SANS}`}>
          75
        </div>
      </main>
      <Taskbar />
    </div>
  );
}
